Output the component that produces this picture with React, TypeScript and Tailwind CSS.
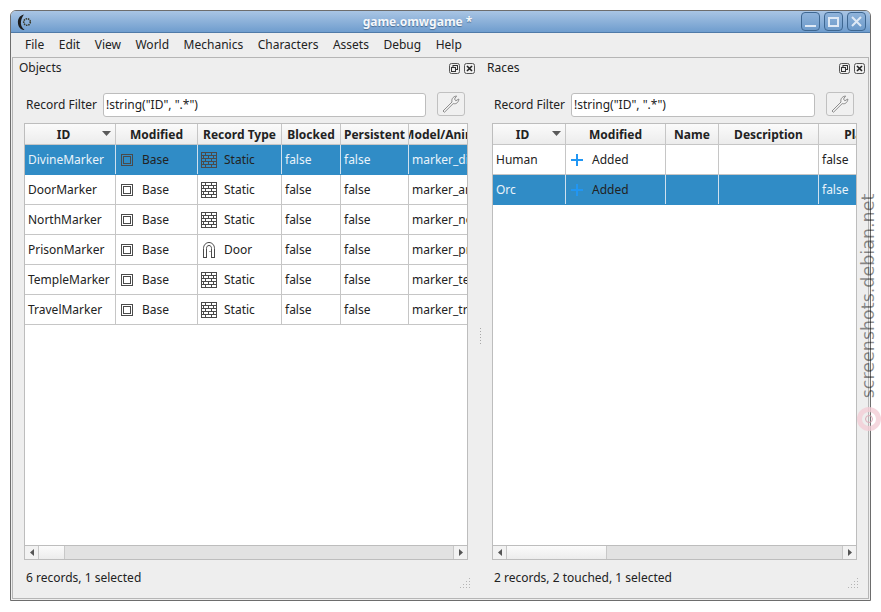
import React from "react";

const FONT = "[font-family:'Noto_Sans',sans-serif]";

function BaseIcon() {
  return (
    <svg width="12" height="12" viewBox="0 0 12 12" className="shrink-0">
      <rect x="0.5" y="0.5" width="11" height="11" fill="none" stroke="#4a4a4a" />
      <rect x="2.5" y="2.5" width="7" height="7" fill="none" stroke="#4a4a4a" />
    </svg>
  );
}

function StaticIcon() {
  return (
    <svg width="16" height="16" viewBox="0 0 16 16" className="shrink-0">
      <rect x="0.5" y="0.5" width="15" height="15" fill="none" stroke="#4a4a4a" />
      <path d="M0 3.500H16M0 6.500H16M0 9.500H16M0 12.500H16" stroke="#4a4a4a" />
      <path d="M4.500 0V3M10.500 0V3M2.500 3V6M7.500 3V6M12.500 3V6M4.500 6V9M10.500 6V9M2.500 9V12M7.500 9V12M12.500 9V12M4.500 12V16M10.500 12V16" stroke="#4a4a4a" />
    </svg>
  );
}

function DoorIcon() {
  return (
    <svg width="16" height="16" viewBox="0 0 16 16" className="shrink-0">
      <path d="M2.500 15.500V6.500C2.500 3 5 0.500 8 0.500C11 0.500 13.500 3 13.500 6.500V15.500" fill="none" stroke="#4a4a4a" />
      <path d="M5.500 15.500V6.500C5.500 4.500 6.500 3.500 8 3.500C9.500 3.500 10.500 4.500 10.500 6.500V15.500" fill="none" stroke="#4a4a4a" />
      <path d="M2 15.500H6M10 15.500H14" stroke="#4a4a4a" />
      <rect x="8.500" y="9" width="1" height="1" fill="#4a4a4a" />
    </svg>
  );
}

function PlusIcon() {
  return (
    <svg width="12" height="12" viewBox="0 0 12 12" className="shrink-0">
      <path d="M6 0V12M0 6H12" stroke="#2196f3" strokeWidth="2" />
    </svg>
  );
}

function Wrench() {
  return (
    <svg width="20" height="20" viewBox="0 0 20 20">
      <path
        d="M3 18L2 17L11 8C10.300 5.500 11.500 2.600 15.600 2L13.500 5L14.800 6.800L17.900 5C17.600 8.600 15 10.400 12.200 9.600L3.500 18.200Z"
        fill="#f4f4f4"
        stroke="#8c8c8c"
        strokeWidth="1"
      />
    </svg>
  );
}

function Caret() {
  return (
    <svg width="9" height="5" viewBox="0 0 9 5" className="absolute right-[4px] top-[7px]">
      <path d="M0 0H9L4.500 5Z" fill="#5a5a5a" />
    </svg>
  );
}

function FloatButtons() {
  return (
    <div className="flex gap-[4px]">
      <svg width="11" height="11" viewBox="0 0 11 11">
        <rect x="0.500" y="0.500" width="10" height="10" rx="2" fill="none" stroke="#555" />
        <rect x="4" y="2.500" width="4.500" height="4" fill="none" stroke="#333" />
        <rect x="2.500" y="4.500" width="4" height="4" fill="#eee" stroke="#333" />
      </svg>
      <svg width="11" height="11" viewBox="0 0 11 11">
        <rect x="0.500" y="0.500" width="10" height="10" rx="2" fill="none" stroke="#555" />
        <path d="M3 3L8 8M8 3L3 8" stroke="#222" strokeWidth="1.600" />
      </svg>
    </div>
  );
}

function Grip() {
  return (
    <svg width="12" height="12" viewBox="0 0 12 12" className="shrink-0 mb-[9px]">
      {[[10, 1], [7, 4], [10, 4], [4, 7], [7, 7], [10, 7], [1, 10], [4, 10], [7, 10], [10, 10]].map(([x, y], i) => (
        <rect key={i} x={x} y={y} width="1" height="1" fill="#b4b4b4" />
      ))}
    </svg>
  );
}

function Scrollbar({ thumb }: { thumb: string }) {
  return (
    <div className="h-[14px] shrink-0 flex border-t border-[#bdbdbd] bg-[#e2e2e2]">
      <div className="w-[14px] shrink-0 flex items-center justify-center bg-[#f2f2f2] border-r border-[#c8c8c8]">
        <svg width="4" height="7" viewBox="0 0 4 7"><path d="M4 0V7L0 3.500Z" fill="#555" /></svg>
      </div>
      <div className={`${thumb} shrink-0 bg-gradient-to-b from-[#fbfbfb] to-[#ececec] border-r border-[#c8c8c8]`} />
      <div className="flex-1" />
      <div className="w-[14px] shrink-0 flex items-center justify-center bg-[#f2f2f2] border-l border-[#c8c8c8]">
        <svg width="4" height="7" viewBox="0 0 4 7"><path d="M0 0V7L4 3.500Z" fill="#555" /></svg>
      </div>
    </div>
  );
}

function HeaderCell({ w, label, sort }: { w: string; label: string; sort?: boolean }) {
  return (
    <div className={`${w} shrink-0 relative h-full overflow-hidden flex items-center justify-center pt-[2px] border-r border-[#c6c6c6] font-bold text-[#222] whitespace-nowrap ${sort ? "pr-[13px]" : ""}`}>
      {label}
      {sort && <Caret />}
    </div>
  );
}

function Cell({ w, selected, children }: { w: string; selected?: boolean; children: React.ReactNode }) {
  return (
    <div className={`${w} shrink-0 h-full overflow-hidden flex items-center px-[3px] whitespace-nowrap border-r ${selected ? "border-[#cfe0ee]" : "border-[#c6c6c6]"}`}>
      {children}
    </div>
  );
}

const LEFT_W = ["w-[91px]", "w-[82px]", "w-[84px]", "w-[59px]", "w-[68px]", "w-[94px]"];
const RIGHT_W = ["w-[73px]", "w-[100px]", "w-[53px]", "w-[100px]", "w-[102px]"];

function Row({ selected, children }: { selected?: boolean; children: React.ReactNode }) {
  return (
    <div className={`h-[30px] flex shrink-0 border-b ${selected ? "bg-[#308cc6] text-[#eaf3fa] border-[#308cc6]" : "text-[#222] border-[#c6c6c6]"}`}>
      {children}
    </div>
  );
}

function IconText({ icon, text, selected }: { icon: React.ReactNode; text: string; selected?: boolean }) {
  return (
    <div className="flex items-center h-full">
      <span className="w-[16px] flex justify-center">{icon}</span>
      <span className={`ml-[7px] ${selected ? "text-[#222]" : ""}`}>{text}</span>
    </div>
  );
}

const LEFT_ROWS = [
  ["DivineMarker", "Static", "marker_divine"],
  ["DoorMarker", "Static", "marker_arrow"],
  ["NorthMarker", "Static", "marker_north"],
  ["PrisonMarker", "Door", "marker_prison"],
  ["TempleMarker", "Static", "marker_temple"],
  ["TravelMarker", "Static", "marker_travel"],
];

function ObjectsTable() {
  return (
    <div className="h-full flex flex-col border border-[#bdbdbd] bg-white overflow-hidden">
      <div className="h-[21px] shrink-0 flex border-b border-[#c6c6c6] bg-gradient-to-b from-[#fbfbfb] to-[#ececec]">
        <HeaderCell w={LEFT_W[0]} label="ID" sort />
        <HeaderCell w={LEFT_W[1]} label="Modified" />
        <HeaderCell w={LEFT_W[2]} label="Record Type" />
        <HeaderCell w={LEFT_W[3]} label="Blocked" />
        <HeaderCell w={LEFT_W[4]} label="Persistent" />
        <HeaderCell w={LEFT_W[5]} label="Model/Animation" />
      </div>
      <div className="flex-1 min-h-0">
        {LEFT_ROWS.map(([id, type, model], i) => {
          const sel = i === 0;
          return (
            <Row key={id} selected={sel}>
              <Cell w={LEFT_W[0]} selected={sel}>{id}</Cell>
              <Cell w={LEFT_W[1]} selected={sel}><IconText icon={<BaseIcon />} text="Base" selected={sel} /></Cell>
              <Cell w={LEFT_W[2]} selected={sel}>
                <IconText icon={type === "Door" ? <DoorIcon /> : <StaticIcon />} text={type} selected={sel} />
              </Cell>
              <Cell w={LEFT_W[3]} selected={sel}>false</Cell>
              <Cell w={LEFT_W[4]} selected={sel}>false</Cell>
              <Cell w={LEFT_W[5]} selected={sel}>{model}</Cell>
            </Row>
          );
        })}
      </div>
      <Scrollbar thumb="w-[26px]" />
    </div>
  );
}

function RacesTable() {
  return (
    <div className="h-full flex flex-col border border-[#bdbdbd] bg-white overflow-hidden">
      <div className="h-[21px] shrink-0 flex border-b border-[#c6c6c6] bg-gradient-to-b from-[#fbfbfb] to-[#ececec]">
        <HeaderCell w={RIGHT_W[0]} label="ID" sort />
        <HeaderCell w={RIGHT_W[1]} label="Modified" />
        <HeaderCell w={RIGHT_W[2]} label="Name" />
        <HeaderCell w={RIGHT_W[3]} label="Description" />
        <HeaderCell w={RIGHT_W[4]} label="Playable" />
      </div>
      <div className="flex-1 min-h-0">
        {["Human", "Orc"].map((id, i) => {
          const sel = i === 1;
          return (
            <Row key={id} selected={sel}>
              <Cell w={RIGHT_W[0]} selected={sel}>{id}</Cell>
              <Cell w={RIGHT_W[1]} selected={sel}><IconText icon={<PlusIcon />} text="Added" selected={sel} /></Cell>
              <Cell w={RIGHT_W[2]} selected={sel}>{""}</Cell>
              <Cell w={RIGHT_W[3]} selected={sel}>{""}</Cell>
              <Cell w={RIGHT_W[4]} selected={sel}>false</Cell>
            </Row>
          );
        })}
      </div>
      <Scrollbar thumb="w-[100px]" />
    </div>
  );
}

function FilterRow({ inputW, gap }: { inputW: string; gap: string }) {
  return (
    <div className="h-[26px] flex items-center shrink-0">
      <span className="text-[#222] mr-[6px] whitespace-nowrap">Record Filter</span>
      <div className={`${inputW} h-[24px] bg-white border border-[#bdbdbd] rounded-[3px] flex items-center pl-[2px] text-[#222] whitespace-nowrap`}>
        {'!string("ID", ".*")'}
      </div>
      <div className={`${gap} w-[28px] h-[24px] -mt-[2px] border border-[#c0c0c0] rounded-[3px] bg-[#f0f0f0] flex items-center justify-center`}>
        <Wrench />
      </div>
    </div>
  );
}

export default function App() {
  return (
    <div className={`w-[881px] h-[612px] bg-white overflow-hidden relative pt-[10px] pl-[10px] text-[12px] leading-none ${FONT}`}>
      <div className="w-[861px] h-[591px] flex flex-col bg-[#eeeeee] border border-[#6d6d6d] rounded-t-[6px] overflow-hidden">
        {/* Title bar */}
        <div className="h-[22px] shrink-0 relative flex items-center justify-center pr-[46px] bg-gradient-to-b from-[#a9c5e4] to-[#6f9dce] border-b border-[#4f7aa8]">
          <svg width="16" height="17" viewBox="0 0 16 17" className="absolute left-[6px] top-[3px]">
            <path d="M7 0.500C2.500 1.500 0.500 5 1 9.500C1.500 13.500 4 16 7.500 16C4.500 13.500 3.500 10.500 4 7.500C4.400 4.500 5.500 2.500 7 0.500Z" fill="#1c1c1c" />
            <circle cx="10" cy="8" r="3.300" fill="none" stroke="#3a3a2a" strokeWidth="1.600" strokeDasharray="1.500 0.800" />
          </svg>
          <span className="font-bold text-[#f4f7fb] [text-shadow:0_1px_1px_#4a6d94]">game.omwgame *</span>
          <div className="absolute right-[4px] top-[1px] flex gap-[4px]">
            <div className="w-[19px] h-[19px] rounded-[4px] border border-[#3e6791] bg-gradient-to-b from-[#8fb3da] to-[#6e9bcb] flex items-end justify-center pb-[3px]">
              <div className="w-[11px] h-[2px] bg-[#dfe9f5]" />
            </div>
            <div className="w-[19px] h-[19px] rounded-[4px] border border-[#3e6791] bg-gradient-to-b from-[#8fb3da] to-[#6e9bcb] flex items-center justify-center">
              <div className="w-[11px] h-[10px] border-2 border-[#dfe9f5]" />
            </div>
            <div className="w-[19px] h-[19px] rounded-[4px] border border-[#3e6791] bg-gradient-to-b from-[#8fb3da] to-[#6e9bcb] flex items-center justify-center">
              <svg width="11" height="11" viewBox="0 0 11 11"><path d="M1 1L10 10M10 1L1 10" stroke="#dfe9f5" strokeWidth="2" /></svg>
            </div>
          </div>
        </div>
        {/* Menu bar */}
        <div className="h-[24px] shrink-0 flex items-center text-[#222] pl-[14px] gap-[14.500px]">
          {["File", "Edit", "View", "World", "Mechanics", "Characters", "Assets", "Debug", "Help"].map((m) => (
            <span key={m}>{m}</span>
          ))}
        </div>
        {/* Central area */}
        <div className="flex-1 min-h-0 mx-[1px] mb-[1px] border border-[#b5b5b5] flex">
          {/* Objects dock */}
          <div className="w-[465px] shrink-0 flex flex-col">
            <div className="h-[20px] shrink-0 flex items-center justify-between pl-[6px] pr-[3px] text-[#222]">
              <span>Objects</span>
              <FloatButtons />
            </div>
            <div className="h-[14px] shrink-0" />
            <div className="pl-[13px] shrink-0"><FilterRow inputW="w-[323px]" gap="ml-[11px]" /></div>
            <div className="flex-1 min-h-0 pl-[11px] pt-[5px] w-[455px]"><ObjectsTable /></div>
            <div className="h-[38px] shrink-0 flex items-end justify-between pl-[13px] pr-[7px] text-[#222]">
              <span className="mb-[14px]">6 records, 1 selected</span>
              <Grip />
            </div>
          </div>
          {/* Splitter */}
          <div className="w-[9px] shrink-0 flex items-center justify-center -ml-[1px] pr-[3px]">
            <div className="flex flex-col gap-[2px] pt-[16px]">
              {[0, 1, 2, 3, 4, 5].map((i) => <div key={i} className="w-[1px] h-[1px] bg-[#a8a8a8]" />)}
            </div>
          </div>
          {/* Races dock */}
          <div className="flex-1 min-w-0 flex flex-col">
            <div className="h-[20px] shrink-0 flex items-center justify-between pl-[1px] pr-[3px] text-[#222]">
              <span>Races</span>
              <FloatButtons />
            </div>
            <div className="h-[14px] shrink-0" />
            <div className="pl-[8px] shrink-0"><FilterRow inputW="w-[244px]" gap="ml-[11px]" /></div>
            <div className="flex-1 min-h-0 pl-[6px] pr-[11px] pt-[5px]"><RacesTable /></div>
            <div className="h-[38px] shrink-0 flex items-end justify-between pl-[8px] pr-[9px] text-[#222]">
              <span className="mb-[14px]">2 records, 2 touched, 1 selected</span>
              <Grip />
            </div>
          </div>
        </div>
      </div>
      {/* Watermark */}
      <div className="absolute left-[869px] top-[296px] -translate-x-1/2 -translate-y-1/2 -rotate-90 whitespace-nowrap text-[17.500px] font-['DejaVu_Sans'] text-black/45">
        screenshots.debian.net
      </div>
      <div className="absolute left-[857px] top-[407px] w-[24px] h-[24px] rounded-full border-[5px] border-[#f3cdd6]/80 flex items-center justify-center">
        <div className="w-[8px] h-[8px] rounded-full border border-[#dcaab8] shrink-0" />
      </div>
    </div>
  );
}
